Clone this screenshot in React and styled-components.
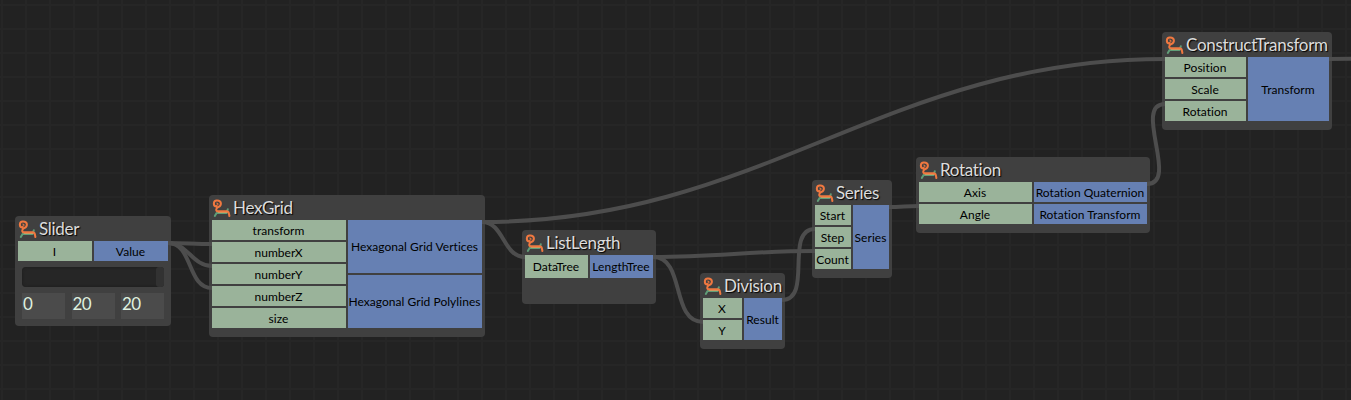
import React from 'react';
import styled, { createGlobalStyle } from 'styled-components';

const GlobalStyle = createGlobalStyle`
  * { box-sizing: border-box; }
  html, body { margin: 0; padding: 0; background: #222222; overflow: hidden; }
  body { font-family: Lato, "Liberation Sans", sans-serif; font-variant-ligatures: none; }
`;

const Canvas = styled.main`
  position: relative;
  width: 1351px;
  height: 400px;
  overflow: hidden;
  background-color: #222222;
  background-image:
    linear-gradient(90deg, #262626 2px, transparent 2px),
    linear-gradient(#262626 2px, transparent 2px);
  background-size: 24px 24px;
  background-position: 1px 0, 0 4px;
`;

const NodeFrame = styled.section`
  position: absolute;
  left: ${(p) => p.$x}px;
  top: ${(p) => p.$y}px;
  width: ${(p) => p.$w}px;
  height: ${(p) => p.$h}px;
  padding: 0 3px;
  border-radius: 4px;
  background: #404040;
`;

const Header = styled.header`
  display: flex;
  align-items: flex-start;
  height: 25px;
  padding-top: 3px;
  white-space: nowrap;
`;

const Logo = styled.svg`
  flex: none;
  width: 20px;
  height: 20px;
  margin-top: 1px;
`;

const Title = styled.h2`
  margin: 0 0 0 1px;
  font-size: 17px;
  font-weight: 400;
  letter-spacing: -0.3px;
  line-height: 20px;
  color: #dcdcdc;
  text-shadow: 1px 1px 1px #000000;
`;

const Ports = styled.div`
  display: grid;
  grid-template-columns: ${(p) => p.$columns};
  gap: 2px;
  height: ${(p) => p.$h}px;
`;

const PortColumn = styled.div`
  display: flex;
  flex-direction: column;
  gap: 2px;
  min-width: 0;
`;

const Port = styled.div`
  display: flex;
  flex: 1;
  align-items: center;
  justify-content: center;
  overflow: hidden;
  padding: 1px 1px 0 0;
  background: ${(p) => (p.$output ? '#6680b3' : '#9ab39a')};
  color: #000000;
  font-size: 12px;
  letter-spacing: 0.04px;
  line-height: 16px;
  white-space: nowrap;
`;

const Track = styled.div`
  display: flex;
  justify-content: flex-end;
  height: 20px;
  margin: 6px 4px;
  border-radius: 4px;
  background: #262626;
  box-shadow: inset 0 0 3px #1c1c1c;
`;

const Thumb = styled.div`
  width: 8px;
  height: 20px;
  border-radius: 3px;
  background: #323232;
`;

const Fields = styled.div`
  display: flex;
  justify-content: space-between;
  margin: 0 4px;
`;

const Field = styled.div`
  width: 43px;
  height: 26px;
  padding-left: 1px;
  background: #4b4b4b;
  color: #dff0df;
  font-size: 17px;
  letter-spacing: -0.6px;
  line-height: 22px;
`;

const Wires = styled.svg`
  position: absolute;
  inset: 0;
  pointer-events: none;
`;

const nodes = [
  { title: 'Slider', x: 15, y: 216, w: 156, h: 110, portsH: 20, inputs: ['I'], outputs: ['Value'], slider: ['0', '20', '20'] },
  { title: 'HexGrid', x: 209, y: 195, w: 276, h: 142, portsH: 108, inputs: ['transform', 'numberX', 'numberY', 'numberZ', 'size'], outputs: ['Hexagonal Grid Vertices', 'Hexagonal Grid Polylines'] },
  { title: 'ListLength', x: 522, y: 230, w: 134, h: 74, portsH: 23, inputs: ['DataTree'], outputs: ['LengthTree'] },
  { title: 'Division', x: 700, y: 273, w: 85, h: 76, portsH: 42, columns: '39px 38px', inputs: ['X', 'Y'], outputs: ['Result'] },
  { title: 'Series', x: 812, y: 180, w: 80, h: 98, portsH: 64, inputs: ['Start', 'Step', 'Count'], outputs: ['Series'] },
  { title: 'Rotation', x: 916, y: 157, w: 234, h: 76, portsH: 42, inputs: ['Axis', 'Angle'], outputs: ['Rotation Quaternion', 'Rotation Transform'] },
  { title: 'ConstructTransform', x: 1162, y: 32, w: 170, h: 98, portsH: 64, inputs: ['Position', 'Scale', 'Rotation'], outputs: ['Transform'] },
];

const wires = [
  [168, 243, 212, 244],
  [168, 243, 212, 266],
  [168, 243, 212, 288],
  [482, 222, 1165, 59],
  [482, 222, 525, 257],
  [653, 257, 815, 251],
  [653, 257, 703, 322],
  [782, 300, 815, 229],
  [889, 207, 919, 206],
  [1147, 184, 1165, 104],
  [1329, 59, 1500, 56],
];

function wirePath([x1, y1, x2, y2]) {
  const reach = Math.hypot(x2 - x1, y2 - y1) * 0.4;
  return `M${x1} ${y1}C${x1 + reach} ${y1} ${x2 - reach} ${y2} ${x2} ${y2}`;
}

function NodeLogo() {
  return (
    <Logo viewBox="0 0 20 20" fill="none" strokeLinecap="round" strokeLinejoin="round">
      <path d="M2.8 17L4.6 14H14.6L15.8 10.2" stroke="#5f9d78" strokeWidth="2" />
      <path d="M6.5 13.2H15" stroke="#c9a36a" strokeWidth="1.6" />
      <path d="M4.4 6.4C6.4 6.2 6.6 4.4 4.8 4" stroke="#f07840" strokeWidth="1.1" />
      <path d="M4.6 7.6C0.8 7.4 1 1.6 4.8 1.4C10 1.2 10 6.4 6.2 8.2C3.6 9.4 3.4 12.2 6.4 12.2H14.8C16.6 12.2 16.8 13.4 17.4 17" stroke="#f07840" strokeWidth="2" />
    </Logo>
  );
}

function GraphNode({ node }) {
  return (
    <NodeFrame $x={node.x} $y={node.y} $w={node.w} $h={node.h}>
      <Header>
        <NodeLogo />
        <Title>{node.title}</Title>
      </Header>
      <Ports $h={node.portsH} $columns={node.columns || 'minmax(0, 1fr) minmax(0, 1fr)'}>
        <PortColumn>
          {node.inputs.map((name) => <Port key={name}>{name}</Port>)}
        </PortColumn>
        <PortColumn>
          {node.outputs.map((name) => <Port key={name} $output>{name}</Port>)}
        </PortColumn>
      </Ports>
      {node.slider && (
        <>
          <Track><Thumb /></Track>
          <Fields>
            {node.slider.map((value, i) => <Field key={i}>{value}</Field>)}
          </Fields>
        </>
      )}
    </NodeFrame>
  );
}

export default function App() {
  return (
    <>
      <GlobalStyle />
      <Canvas>
        {nodes.map((node) => <GraphNode key={node.title} node={node} />)}
        <Wires width="1351" height="400" fill="none" stroke="#4d4d4d" strokeWidth="4">
          {wires.map((wire) => <path key={wire.join()} d={wirePath(wire)} />)}
        </Wires>
      </Canvas>
    </>
  );
}
